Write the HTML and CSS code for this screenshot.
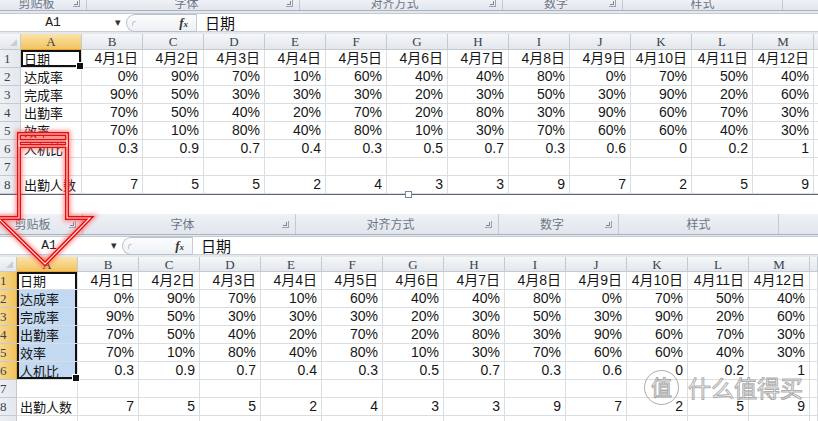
FILE: index.html
```html
<!DOCTYPE html>
<html lang="zh-CN">
<head>
<meta charset="utf-8">
<title>Excel</title>
<link rel="stylesheet" href="styles.css">
</head>
<body>
<div class="page">

  <section class="sheet sheet-top">
    <div class="ribbon">
      <div class="grp g1"><span class="lbl">剪贴板</span><span class="launch"></span></div>
      <div class="grp g2"><span class="lbl">字体</span><span class="launch"></span></div>
      <div class="grp g3"><span class="lbl">对齐方式</span><span class="launch"></span></div>
      <div class="grp g4"><span class="lbl">数字</span><span class="launch"></span></div>
      <div class="grp g5"><span class="lbl">样式</span></div>
      <div class="grp g6"></div>
    </div>
    <div class="fbar">
      <div class="namebox">A1</div>
      <div class="dd">&#9662;</div>
      <div class="fxwrap"><span class="grip"></span><span class="fx">f<small>x</small></span></div>
      <div class="finput">日期</div>
    </div>
    <div class="grid">
      <span class="corner"></span><span class="ch on">A</span><span class="ch">B</span><span class="ch">C</span><span class="ch">D</span><span class="ch">E</span><span class="ch">F</span><span class="ch">G</span><span class="ch">H</span><span class="ch">I</span><span class="ch">J</span><span class="ch">K</span><span class="ch">L</span><span class="ch">M</span><span class="ch"></span>
      <span class="rh">1</span><span class="c a one">日期</span><span class="c">4月1日</span><span class="c">4月2日</span><span class="c">4月3日</span><span class="c">4月4日</span><span class="c">4月5日</span><span class="c">4月6日</span><span class="c">4月7日</span><span class="c">4月8日</span><span class="c">4月9日</span><span class="c">4月10日</span><span class="c">4月11日</span><span class="c">4月12日</span><span class="c"></span>
      <span class="rh">2</span><span class="c a">达成率</span><span class="c">0%</span><span class="c">90%</span><span class="c">70%</span><span class="c">10%</span><span class="c">60%</span><span class="c">40%</span><span class="c">40%</span><span class="c">80%</span><span class="c">0%</span><span class="c">70%</span><span class="c">50%</span><span class="c">40%</span><span class="c"></span>
      <span class="rh">3</span><span class="c a">完成率</span><span class="c">90%</span><span class="c">50%</span><span class="c">30%</span><span class="c">30%</span><span class="c">30%</span><span class="c">20%</span><span class="c">30%</span><span class="c">50%</span><span class="c">30%</span><span class="c">90%</span><span class="c">20%</span><span class="c">60%</span><span class="c"></span>
      <span class="rh">4</span><span class="c a">出勤率</span><span class="c">70%</span><span class="c">50%</span><span class="c">40%</span><span class="c">20%</span><span class="c">70%</span><span class="c">20%</span><span class="c">80%</span><span class="c">30%</span><span class="c">90%</span><span class="c">60%</span><span class="c">70%</span><span class="c">30%</span><span class="c"></span>
      <span class="rh">5</span><span class="c a">效率</span><span class="c">70%</span><span class="c">10%</span><span class="c">80%</span><span class="c">40%</span><span class="c">80%</span><span class="c">10%</span><span class="c">30%</span><span class="c">70%</span><span class="c">60%</span><span class="c">60%</span><span class="c">40%</span><span class="c">30%</span><span class="c"></span>
      <span class="rh">6</span><span class="c a">人机比</span><span class="c">0.3</span><span class="c">0.9</span><span class="c">0.7</span><span class="c">0.4</span><span class="c">0.3</span><span class="c">0.5</span><span class="c">0.7</span><span class="c">0.3</span><span class="c">0.6</span><span class="c">0</span><span class="c">0.2</span><span class="c">1</span><span class="c"></span>
      <span class="rh">7</span><span class="c a"></span><span class="c"></span><span class="c"></span><span class="c"></span><span class="c"></span><span class="c"></span><span class="c"></span><span class="c"></span><span class="c"></span><span class="c"></span><span class="c"></span><span class="c"></span><span class="c"></span><span class="c"></span>
      <span class="rh">8</span><span class="c a">出勤人数</span><span class="c">7</span><span class="c">5</span><span class="c">5</span><span class="c">2</span><span class="c">4</span><span class="c">3</span><span class="c">3</span><span class="c">9</span><span class="c">7</span><span class="c">2</span><span class="c">5</span><span class="c">9</span><span class="c"></span>
    </div>
    <span class="handle"></span>
  </section>

  <section class="sheet sheet-bottom">
    <div class="ribbon">
      <div class="grp g1"><span class="lbl">剪贴板</span><span class="launch"></span></div>
      <div class="grp g2"><span class="lbl">字体</span><span class="launch"></span></div>
      <div class="grp g3"><span class="lbl">对齐方式</span><span class="launch"></span></div>
      <div class="grp g4"><span class="lbl">数字</span><span class="launch"></span></div>
      <div class="grp g5"><span class="lbl">样式</span></div>
      <div class="grp g6"></div>
    </div>
    <div class="fbar">
      <div class="namebox">A1</div>
      <div class="dd">&#9662;</div>
      <div class="fxwrap"><span class="grip"></span><span class="fx">f<small>x</small></span></div>
      <div class="finput">日期</div>
    </div>
    <div class="grid">
      <span class="corner"></span><span class="ch on">A</span><span class="ch">B</span><span class="ch">C</span><span class="ch">D</span><span class="ch">E</span><span class="ch">F</span><span class="ch">G</span><span class="ch">H</span><span class="ch">I</span><span class="ch">J</span><span class="ch">K</span><span class="ch">L</span><span class="ch">M</span><span class="ch"></span>
      <span class="rh on">1</span><span class="c a s-top">日期</span><span class="c">4月1日</span><span class="c">4月2日</span><span class="c">4月3日</span><span class="c">4月4日</span><span class="c">4月5日</span><span class="c">4月6日</span><span class="c">4月7日</span><span class="c">4月8日</span><span class="c">4月9日</span><span class="c">4月10日</span><span class="c">4月11日</span><span class="c">4月12日</span><span class="c"></span>
      <span class="rh on">2</span><span class="c a s-mid">达成率</span><span class="c">0%</span><span class="c">90%</span><span class="c">70%</span><span class="c">10%</span><span class="c">60%</span><span class="c">40%</span><span class="c">40%</span><span class="c">80%</span><span class="c">0%</span><span class="c">70%</span><span class="c">50%</span><span class="c">40%</span><span class="c"></span>
      <span class="rh on">3</span><span class="c a s-mid">完成率</span><span class="c">90%</span><span class="c">50%</span><span class="c">30%</span><span class="c">30%</span><span class="c">30%</span><span class="c">20%</span><span class="c">30%</span><span class="c">50%</span><span class="c">30%</span><span class="c">90%</span><span class="c">20%</span><span class="c">60%</span><span class="c"></span>
      <span class="rh on">4</span><span class="c a s-mid">出勤率</span><span class="c">70%</span><span class="c">50%</span><span class="c">40%</span><span class="c">20%</span><span class="c">70%</span><span class="c">20%</span><span class="c">80%</span><span class="c">30%</span><span class="c">90%</span><span class="c">60%</span><span class="c">70%</span><span class="c">30%</span><span class="c"></span>
      <span class="rh on">5</span><span class="c a s-mid">效率</span><span class="c">70%</span><span class="c">10%</span><span class="c">80%</span><span class="c">40%</span><span class="c">80%</span><span class="c">10%</span><span class="c">30%</span><span class="c">70%</span><span class="c">60%</span><span class="c">60%</span><span class="c">40%</span><span class="c">30%</span><span class="c"></span>
      <span class="rh on">6</span><span class="c a s-end">人机比</span><span class="c">0.3</span><span class="c">0.9</span><span class="c">0.7</span><span class="c">0.4</span><span class="c">0.3</span><span class="c">0.5</span><span class="c">0.7</span><span class="c">0.3</span><span class="c">0.6</span><span class="c">0</span><span class="c">0.2</span><span class="c">1</span><span class="c"></span>
      <span class="rh">7</span><span class="c a"></span><span class="c"></span><span class="c"></span><span class="c"></span><span class="c"></span><span class="c"></span><span class="c"></span><span class="c"></span><span class="c"></span><span class="c"></span><span class="c"></span><span class="c"></span><span class="c"></span><span class="c"></span>
      <span class="rh">8</span><span class="c a">出勤人数</span><span class="c">7</span><span class="c">5</span><span class="c">5</span><span class="c">2</span><span class="c">4</span><span class="c">3</span><span class="c">3</span><span class="c">9</span><span class="c">7</span><span class="c">2</span><span class="c">5</span><span class="c">9</span><span class="c"></span>
      <span class="rh">9</span><span class="c a"></span><span class="c"></span><span class="c"></span><span class="c"></span><span class="c"></span><span class="c"></span><span class="c"></span><span class="c"></span><span class="c"></span><span class="c"></span><span class="c"></span><span class="c"></span><span class="c"></span><span class="c"></span>
    </div>
  </section>

  <svg class="arrow" width="818" height="421" viewBox="0 0 818 421">
    <defs>
      <filter id="glow" x="-20%" y="-20%" width="140%" height="140%">
        <feGaussianBlur stdDeviation="2.2"/>
      </filter>
    </defs>
    <g fill="none" stroke-linejoin="miter">
      <g filter="url(#glow)" stroke="#ff3a3a" stroke-width="7" opacity="0.55">
        <polygon points="19,134 67,134 67,218 90,218 45,264 -2,218 19,218"/>
        <rect x="19" y="141" width="48" height="5"/>
      </g>
      <g stroke="#e41010" stroke-width="4">
        <polygon points="19,134 67,134 67,218 90,218 45,264 -2,218 19,218"/>
        <rect x="19" y="141" width="48" height="5"/>
      </g>
      <g stroke="#ffe4e4" stroke-width="1.1">
        <polygon points="19,134 67,134 67,218 90,218 45,264 -2,218 19,218"/>
        <rect x="19" y="141" width="48" height="5"/>
      </g>
    </g>
  </svg>

  <div class="watermark"><span class="wm-circle">值</span><span class="wm-text">什么值得买</span></div>
</div>
</body>
</html>
```

FILE: styles.css
```css
* { box-sizing: border-box; }

body {
  margin: 0;
  background: #fff;
  font-family: "Liberation Sans", "Noto Sans CJK SC", sans-serif;
  color: #111;
}

.page {
  position: relative;
  width: 818px;
  height: 421px;
  overflow: hidden;
  background: #fff;
}

.sheet {
  width: 822px;
  background: #e4e8ed;
}

.sheet-top {
  position: relative;
  border-bottom: 1px solid #5b6671;
}

.sheet-bottom {
  margin-left: -4px;
  margin-top: 19px;
}

/* ribbon group labels */
.ribbon {
  display: flex;
  background: linear-gradient(#eef1f5, #e2e7ed);
  border-bottom: 1px solid #a9b3bf;
  overflow: hidden;
}
.sheet-top .ribbon { height: 11px; align-items: flex-end; }
.sheet-bottom .ribbon { height: 21px; align-items: center; }

.grp {
  display: flex;
  align-items: center;
  height: 100%;
  border-right: 1px solid #c3cad3;
  flex: none;
}
.sheet-top .grp { align-items: flex-end; }
.g1 { width: 87px; }
.g2 { width: 213px; }
.g3 { width: 203px; }
.g4 { width: 120px; }
.g5 { width: 160px; }
.g6 { flex: 1; border-right: none; }

.lbl {
  flex: 1;
  text-align: center;
  font-family: "Noto Sans CJK SC", sans-serif;
  font-size: 12px;
  line-height: 14px;
  color: #6c7686;
  flex-shrink: 0;
}
.sheet-top .lbl { height: 14px; }

.launch {
  width: 7px;
  height: 7px;
  margin: 0 6px 0 0;
  border-right: 1px solid #9aa4b1;
  border-bottom: 1px solid #9aa4b1;
  position: relative;
  flex: none;
}
.sheet-top .launch { margin-bottom: 3px; }
.launch::after {
  content: "";
  position: absolute;
  right: 1px;
  bottom: 1px;
  width: 3px;
  height: 3px;
  border-right: 1px solid #7d8896;
  border-bottom: 1px solid #7d8896;
}

/* formula bar */
.fbar {
  display: flex;
  height: 19px;
  margin-top: 2px;
  background: #fff;
  border-top: 1px solid #c2c9d2;
  border-bottom: 1px solid #c9d0d8;
  align-items: stretch;
}
.sheet-bottom .fbar { margin-top: 1px; }

.namebox {
  width: 106px;
  text-align: center;
  font-family: "Liberation Mono", monospace;
  font-size: 13px;
  line-height: 17px;
  color: #222;
}
.dd {
  width: 20px;
  font-size: 11px;
  line-height: 17px;
  color: #333;
  text-align: left;
  padding-left: 9px;
}
.fxwrap {
  width: 70px;
  display: flex;
  align-items: center;
  justify-content: space-between;
  border: 1px solid #b9c2cc;
  border-right: none;
  border-radius: 9px 0 0 9px;
  margin: 0 0 -1px 0;
  background: linear-gradient(#fbfcfd, #eef1f4);
}
.grip {
  width: 4px;
  height: 5px;
  margin-left: 5px;
  border-left: 1px solid #c3c9d1;
  border-top: 1px solid #c3c9d1;
  border-radius: 3px 0 0 0;
}
.fx {
  font-family: "Liberation Serif", serif;
  font-style: italic;
  font-weight: bold;
  font-size: 13px;
  color: #333;
  margin-right: 8px;
  line-height: 17px;
}
.fx small { font-size: 9px; }
.finput {
  flex: 1;
  border-left: 1px solid #c5ccd5;
  padding-left: 8px;
  font-family: "Noto Sans CJK SC", sans-serif;
  font-size: 15px;
  line-height: 17px;
  color: #111;
}

/* grid */
.grid {
  display: grid;
  grid-template-columns: 21px repeat(13, 61px) 1fr;
  grid-auto-rows: 18px;
  margin-top: 2px;
  background: #fff;
}
.sheet-top .grid { grid-template-rows: 16px; }
.sheet-bottom .grid { grid-template-rows: 15px; }

.corner, .ch, .rh {
  background: linear-gradient(#f5f7f9, #e3e7ec);
  border-right: 1px solid #c4cad2;
  border-bottom: 1px solid #c4cad2;
  font-family: "Liberation Serif", serif;
  font-size: 13px;
  color: #3a4250;
}
.corner { position: relative; }
.corner::after {
  content: "";
  position: absolute;
  right: 3px;
  bottom: 3px;
  border-left: 7px solid transparent;
  border-bottom: 7px solid #c9ced6;
}
.ch {
  text-align: center;
  line-height: 15px;
}
.rh {
  padding-left: 4px;
  line-height: 18px;
  background: linear-gradient(90deg, #eef1f4, #e4e8ed);
}
.ch.on {
  background: linear-gradient(#fbe3a8, #f2c35f);
  border-bottom-color: #e2a530;
}
.rh.on {
  background: linear-gradient(90deg, #f9dc96, #f1c35f);
  border-right-color: #e2a530;
}

.c {
  border-right: 1px solid #dadde2;
  border-bottom: 1px solid #dadde2;
  font-size: 14px;
  line-height: 17px;
  text-align: right;
  padding-right: 4px;
  white-space: nowrap;
  overflow: hidden;
  color: #161616;
}
.c.a {
  text-align: left;
  padding-left: 3px;
  padding-right: 0;
  font-family: "Noto Sans CJK SC", sans-serif;
  font-size: 13px;
}

/* selection */
.one {
  position: relative;
  overflow: visible;
  box-shadow: inset 0 0 0 2px #111;
}
.one::after,
.s-end::after {
  content: "";
  position: absolute;
  right: -3px;
  bottom: -3px;
  width: 6px;
  height: 6px;
  background: #111;
  border: 1px solid #fff;
  z-index: 2;
}
.s-top { box-shadow: inset 2px 0 0 #111, inset -2px 0 0 #111, inset 0 2px 0 #111; }
.s-mid { background: #c3d9f1; box-shadow: inset 2px 0 0 #111, inset -2px 0 0 #111; }
.s-end {
  position: relative;
  overflow: visible;
  background: #c3d9f1;
  box-shadow: inset 2px 0 0 #111, inset -2px 0 0 #111, inset 0 -2px 0 #111;
}

/* image resize handle on the top screenshot */
.handle {
  position: absolute;
  left: 405px;
  bottom: -4px;
  width: 7px;
  height: 7px;
  background: #fff;
  border: 1px solid #6f8aa6;
}

/* red arrow overlay */
.arrow {
  position: absolute;
  left: 0;
  top: 0;
  pointer-events: none;
}

/* watermark */
.watermark {
  position: absolute;
  left: 644px;
  top: 370px;
  display: flex;
  align-items: center;
  gap: 9px;
  white-space: nowrap;
  font-family: "Noto Sans CJK SC", sans-serif;
  color: rgba(255, 255, 255, 0.55);
  -webkit-text-stroke: 1px rgba(150, 150, 150, 0.8);
}
.wm-circle {
  flex: none;
  width: 35px;
  height: 35px;
  border: 1.5px solid rgba(150, 150, 150, 0.8);
  border-radius: 50%;
  font-size: 21px;
  line-height: 31px;
  text-align: center;
}
.wm-text {
  flex: none;
  font-size: 23px;
  line-height: 35px;
}
```
